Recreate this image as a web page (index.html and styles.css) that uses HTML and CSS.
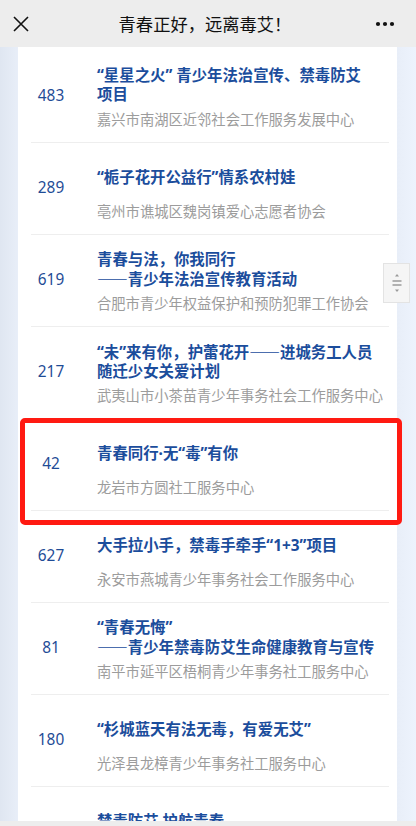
FILE: index.html
```html
<!DOCTYPE html>
<html lang="zh-CN">
<head>
  <meta charset="UTF-8" />
  <meta name="viewport" content="width=device-width, initial-scale=1.0"/>
  <title>青春正好，远离毒艾！</title>
  <link rel="stylesheet" href="styles.css">
</head>
<body>

  <header class="topbar">
    <svg class="close-icon" width="16" height="16" viewBox="0 0 16 16">
      <path d="M1 1 L15 15 M15 1 L1 15" stroke="#111" stroke-width="1.6" fill="none"/>
    </svg>
    <div class="topbar-title">青春正好，远离毒艾！</div>
    <svg class="more-icon" width="20" height="6" viewBox="0 0 20 6">
      <circle cx="3" cy="3" r="2.1" fill="#111"/>
      <circle cx="10" cy="3" r="2.1" fill="#111"/>
      <circle cx="17" cy="3" r="2.1" fill="#111"/>
    </svg>
  </header>

  <main class="page">
    <section class="card">
      <div class="row">
        <div class="num">483</div>
        <div class="info">
          <div class="title"><span>“星星之火” 青少年法治宣传、禁毒防艾<br>项目</span></div>
          <div class="org">嘉兴市南湖区近邻社会工作服务发展中心</div>
        </div>
      </div>

      <div class="row">
        <div class="num">289</div>
        <div class="info">
          <div class="title"><span>“栀子花开公益行”情系农村娃</span></div>
          <div class="org">亳州市谯城区魏岗镇爱心志愿者协会</div>
        </div>
      </div>

      <div class="row">
        <div class="num">619</div>
        <div class="info">
          <div class="title"><span>青春与法，你我同行<br><span class="dash">——</span>青少年法治宣传教育活动</span></div>
          <div class="org">合肥市青少年权益保护和预防犯罪工作协会</div>
        </div>
      </div>

      <div class="row">
        <div class="num">217</div>
        <div class="info">
          <div class="title"><span>“未”来有你，护蕾花开<span class="dash">——</span>进城务工人员<br>随迁少女关爱计划</span></div>
          <div class="org">武夷山市小茶苗青少年事务社会工作服务中心</div>
        </div>
      </div>

      <div class="row">
        <div class="num">42</div>
        <div class="info">
          <div class="title"><span>青春同行·无“毒”有你</span></div>
          <div class="org">龙岩市方圆社工服务中心</div>
        </div>
        <div class="highlight"></div>
      </div>

      <div class="row">
        <div class="num">627</div>
        <div class="info">
          <div class="title"><span>大手拉小手，禁毒手牵手“1+3”项目</span></div>
          <div class="org">永安市燕城青少年事务社会工作服务中心</div>
        </div>
      </div>

      <div class="row">
        <div class="num">81</div>
        <div class="info">
          <div class="title"><span>“青春无悔”<br><span class="dash">——</span>青少年禁毒防艾生命健康教育与宣传</span></div>
          <div class="org">南平市延平区梧桐青少年事务社工服务中心</div>
        </div>
      </div>

      <div class="row">
        <div class="num">180</div>
        <div class="info">
          <div class="title"><span>“杉城蓝天有法无毒，有爱无艾”</span></div>
          <div class="org">光泽县龙樟青少年事务社工服务中心</div>
        </div>
      </div>

      <div class="row">
        <div class="num"></div>
        <div class="info">
          <div class="title"><span>禁毒防艾 护航青春</span></div>
          <div class="org"></div>
        </div>
      </div>
    </section>
  </main>

  <div class="bottombar"></div>

  <!-- floating scroll helper -->
  <div class="scroll-btn">
    <svg width="12" height="22" viewBox="0 0 12 22">
      <path d="M6 2 L8 4.5 L4 4.5 Z" fill="#9a9a9a"/>
      <path d="M1.5 9 H10.5 M1.5 13 H10.5" stroke="#9a9a9a" stroke-width="1.3"/>
      <path d="M4 17.5 L8 17.5 L6 20 Z" fill="#9a9a9a"/>
    </svg>
  </div>

</body>
</html>
```

FILE: styles.css
```css
* {
  box-sizing: border-box;
}

body {
  margin: 0;
  padding: 0;
  height: 826px;
  overflow: hidden;
  display: flex;
  flex-direction: column;
  font-family: "Noto Sans", "Noto Sans CJK SC", sans-serif;
  background: #e7eef9;
}

.topbar {
  height: 47px;
  flex: none;
  background: #ededed;
  display: flex;
  align-items: center;
  justify-content: space-between;
  padding: 0 21px 0 13px;
}

.topbar-title {
  font-family: "Noto Sans CJK SC", sans-serif;
  font-size: 17.3px;
  color: #111;
  margin-left: 6px;
}

.page {
  flex: 1;
  overflow: hidden;
  padding: 0 19px 0 18px;
  background: linear-gradient(to right, #dfe6f1 0, #e8eef8 18px, #e8eef8 397px, #edf3fd 100%);
}

.card {
  background: #fff;
  padding: 4px 8px 0 13px;
}

.row {
  position: relative;
  display: flex;
  align-items: center;
  height: 92px;
  border-bottom: 1px solid #eeeeee;
}

.num {
  width: 40px;
  flex: none;
  text-align: center;
  font-size: 15.4px;
  color: #1f4c96;
  margin-bottom: 2px;
}

.info {
  margin-left: 26px;
  flex: 1;
  display: flex;
  flex-direction: column;
  align-self: stretch;
  padding-top: 15px;
}

.title {
  height: 38px;
  display: flex;
  align-items: center;
  font-size: 15.4px;
  line-height: 19px;
  font-weight: bold;
  color: #1b4d9c;
  white-space: nowrap;
}

.dash {
  font-family: "Noto Sans CJK SC", sans-serif;
}

.org {
  margin-top: 6px;
  font-size: 14.3px;
  line-height: 20px;
  color: #9c9c9c;
  white-space: nowrap;
}

/* red annotation frame */
.highlight {
  position: absolute;
  top: -1px;
  left: -11px;
  right: -13px;
  bottom: -15px;
  border: 5px solid #ff1a12;
  border-radius: 5px;
  z-index: 2;
}

.bottombar {
  height: 5px;
  flex: none;
  background: #ededed;
}

.scroll-btn {
  position: fixed;
  top: 263px;
  right: 6px;
  width: 27px;
  height: 40px;
  background: #f5f5f5;
  border: 1px solid #e3e3e3;
  display: flex;
  align-items: center;
  justify-content: center;
}
```
